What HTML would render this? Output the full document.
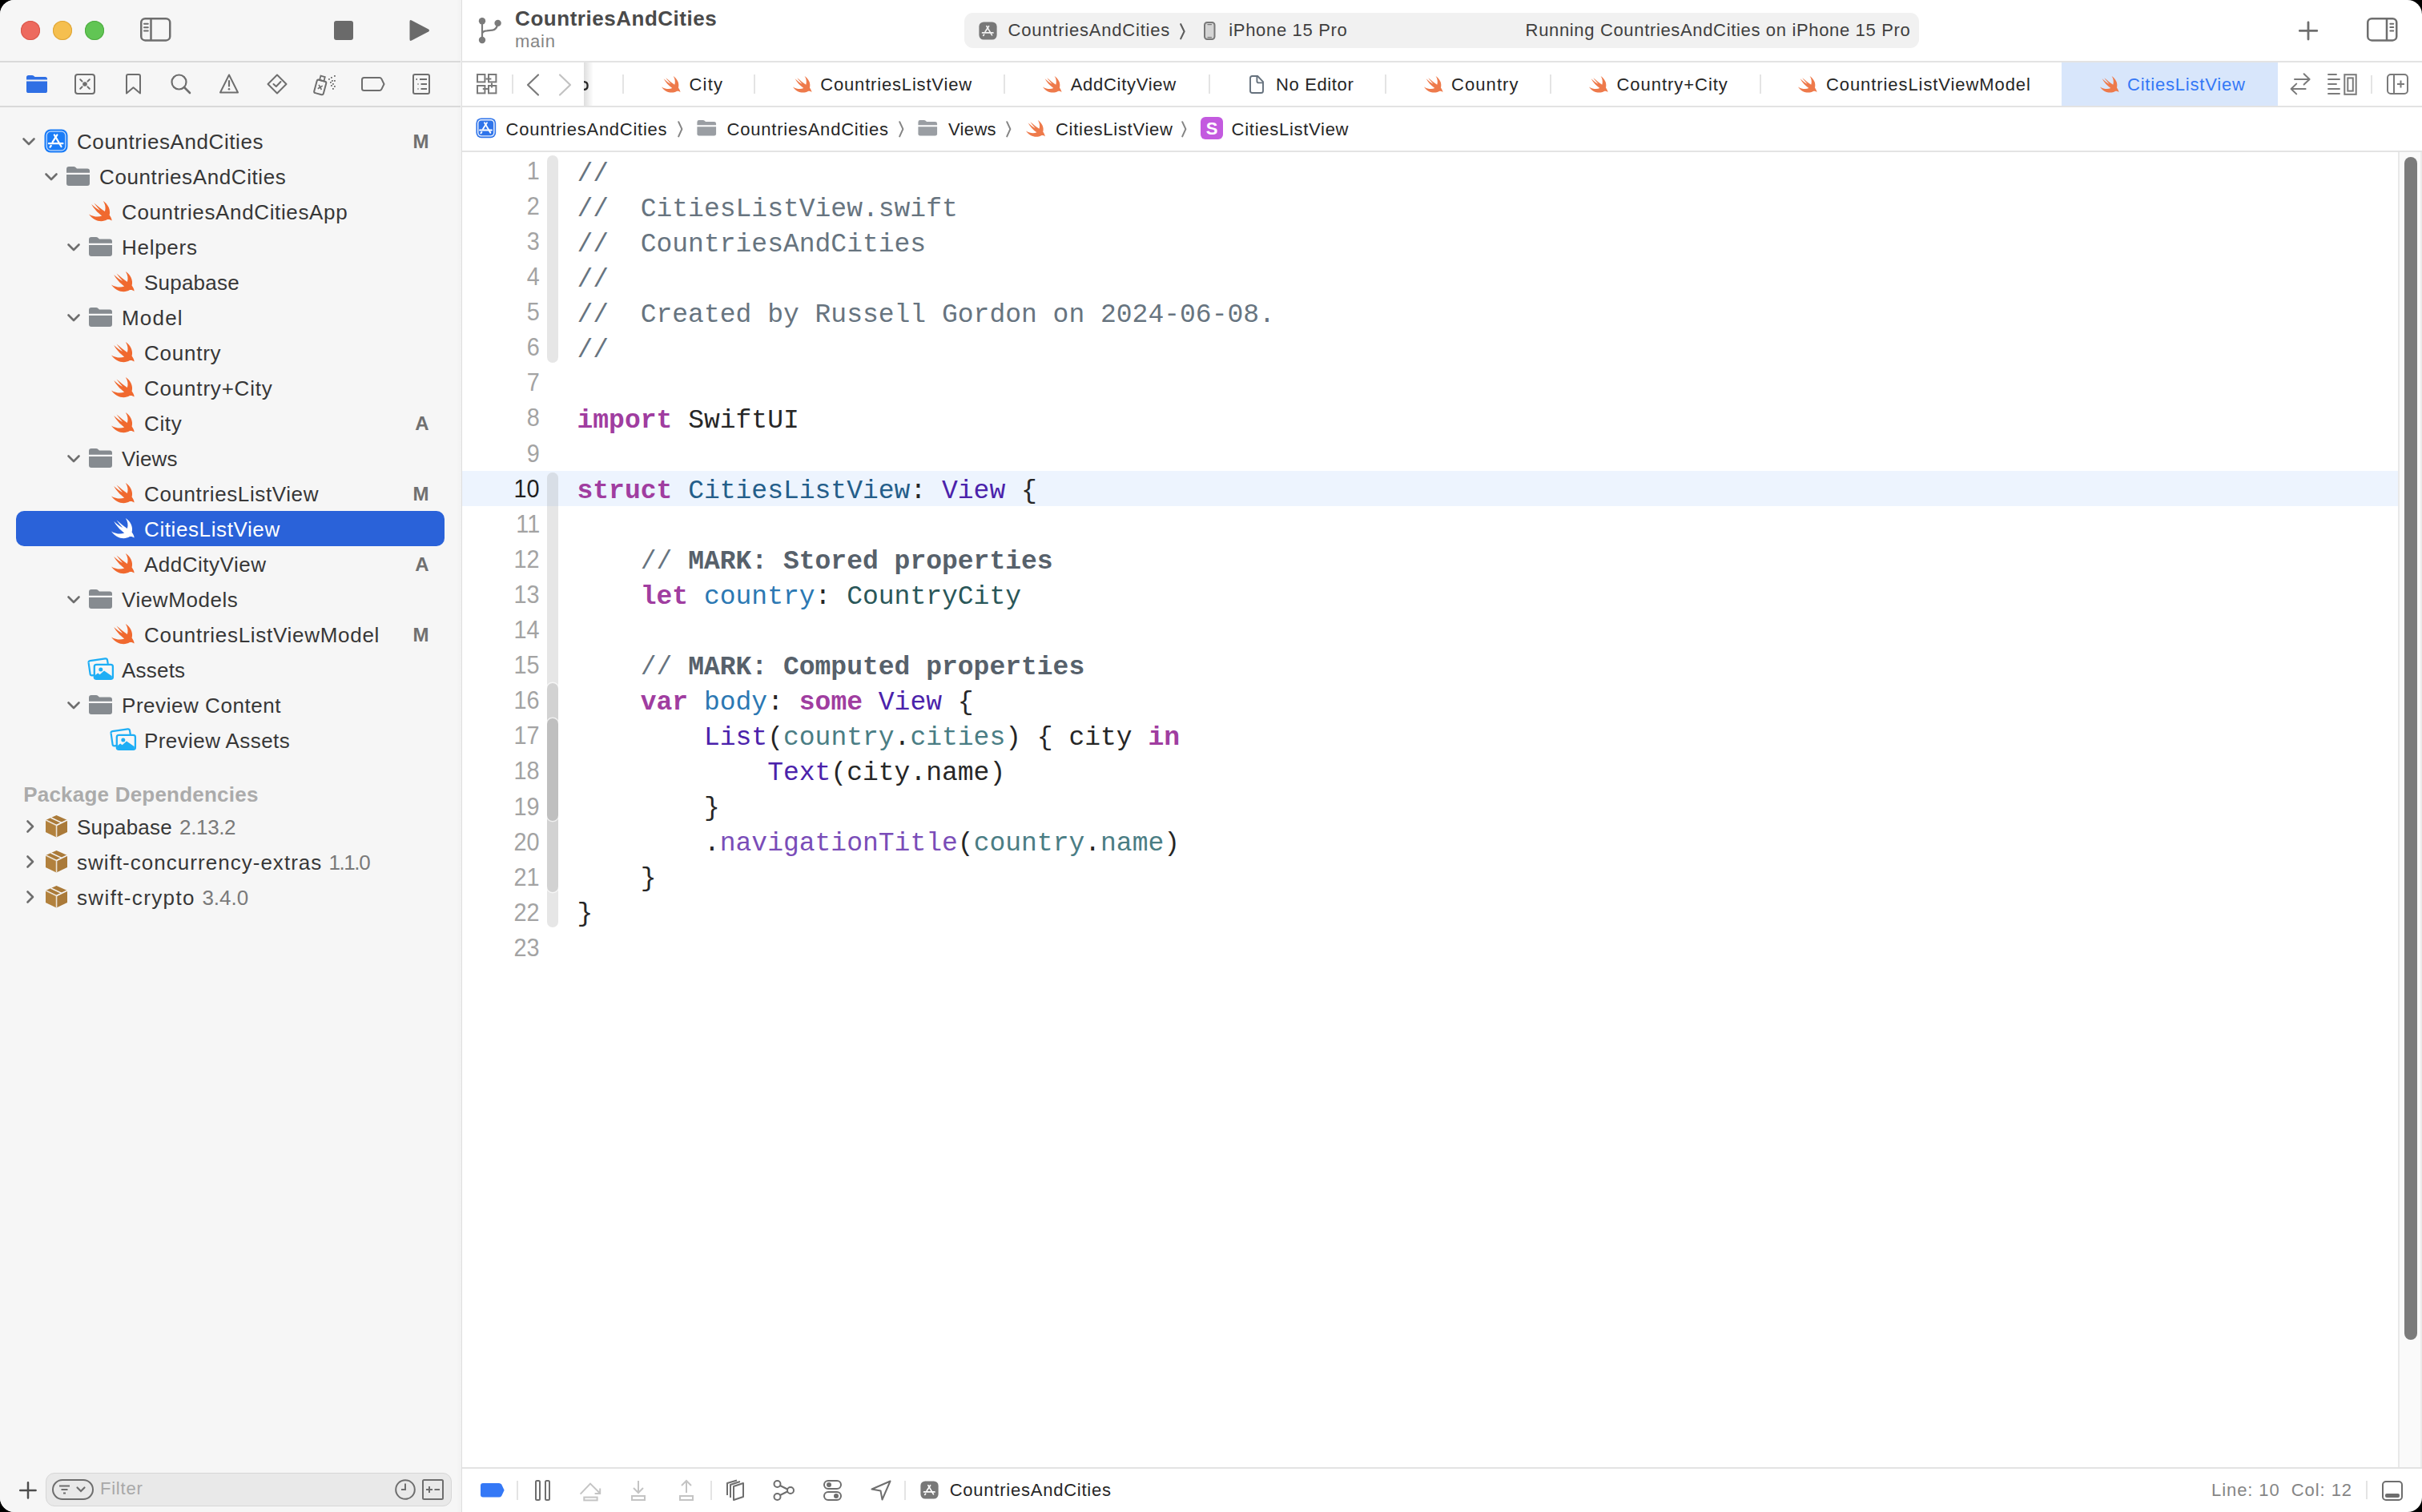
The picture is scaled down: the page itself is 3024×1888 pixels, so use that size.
<!DOCTYPE html><html><head><meta charset="utf-8"><style>
html,body{margin:0;padding:0;background:#000;}
body{width:3024px;height:1888px;overflow:hidden;position:relative;}
#win{position:absolute;left:0;top:0;width:3024px;height:1888px;border-radius:18px;overflow:hidden;background:#fff;}
.t{position:absolute;white-space:pre;}
svg{overflow:visible}
</style></head><body><div id="win">
<div style="position:absolute;left:0px;top:0px;width:576px;height:1888px;background:#f6f6f6;"></div>
<div style="position:absolute;left:570px;top:0px;width:6px;height:1888px;background:linear-gradient(to right, rgba(0,0,0,0), rgba(0,0,0,0.02));"></div>
<div style="position:absolute;left:576px;top:0px;width:1px;height:1888px;background:#dedede;"></div>
<div style="position:absolute;left:0px;top:76px;width:575px;height:2px;background:#d9d9d9;"></div>
<div style="position:absolute;left:0px;top:132px;width:575px;height:2px;background:#d9d9d9;"></div>
<div style="position:absolute;left:26px;top:26px;width:24px;height:24px;border-radius:50%;background:#ed6a5e;box-shadow:inset 0 0 0 1px #d8574a;"></div>
<div style="position:absolute;left:66px;top:26px;width:24px;height:24px;border-radius:50%;background:#f5bf4f;box-shadow:inset 0 0 0 1px #dea437;"></div>
<div style="position:absolute;left:106px;top:26px;width:24px;height:24px;border-radius:50%;background:#61c554;box-shadow:inset 0 0 0 1px #4eab41;"></div>
<svg style="position:absolute;left:175px;top:21.8px" width="39" height="30" viewBox="0 0 39 30"><rect x="1.25" y="1.25" width="36" height="27.2" rx="5" fill="none" stroke="#6e6e6e" stroke-width="2.5"/><path d="M13.5 1.5 V28.5" stroke="#6e6e6e" stroke-width="2.5"/><path d="M5 7.8 H9.8 M5 12.2 H9.8 M5 16.4 H9.8" stroke="#6e6e6e" stroke-width="2" stroke-linecap="round"/></svg>
<div style="position:absolute;left:417px;top:26px;width:24px;height:24px;background:#6a6a6a;border-radius:3px;"></div>
<svg style="position:absolute;left:510px;top:24px" width="27" height="28" viewBox="0 0 27 28"><path d="M1.5 3 Q1.5 0.2 4 1.5 L25 12.5 Q27 14 25 15.5 L4 26.5 Q1.5 27.8 1.5 25 Z" fill="#6a6a6a"/></svg>
<svg style="position:absolute;left:33px;top:94px" width="26" height="22" viewBox="0 0 26 22"><path d="M0 2.6 Q0 0 2.6 0 H7 Q8.4 0 9.4 0.9 L10.6 2 H23.4 Q26 2 26 4.6 V5.6 H0 Z" fill="#2f6fe4"/><path d="M0 7.6 H26 V19.4 Q26 22 23.4 22 H2.6 Q0 22 0 19.4 Z" fill="#2f6fe4"/></svg>
<svg style="position:absolute;left:93px;top:92px" width="26" height="26" viewBox="0 0 26 26"><rect x="1" y="1" width="24" height="24" rx="3" fill="none" stroke="#6e6e6e" stroke-width="2"/><circle cx="13" cy="13" r="2.8" fill="#6e6e6e"/><path d="M7.2 7.2 L9.6 9.6 M18.8 7.2 L16.4 9.6 M7.2 18.8 L9.6 16.4 M18.8 18.8 L16.4 16.4" stroke="#6e6e6e" stroke-width="2" stroke-linecap="round"/></svg>
<svg style="position:absolute;left:157px;top:92px" width="19" height="26" viewBox="0 0 19 26"><path d="M1 24.5 V3 Q1 1 3 1 H16 Q18 1 18 3 V24.5 L9.5 17.3 Z" fill="none" stroke="#6e6e6e" stroke-width="2" stroke-linejoin="round"/></svg>
<svg style="position:absolute;left:213px;top:92px" width="26" height="26" viewBox="0 0 26 26"><circle cx="10.5" cy="10.5" r="9" fill="none" stroke="#6e6e6e" stroke-width="2.2"/><path d="M17 17 L24 24" stroke="#6e6e6e" stroke-width="2.6" stroke-linecap="round"/></svg>
<svg style="position:absolute;left:274px;top:92px" width="24" height="25" viewBox="0 0 24 25"><path d="M12 1.5 L23 23.5 H1 Z" fill="none" stroke="#6e6e6e" stroke-width="2" stroke-linejoin="round"/><path d="M12 9 V15.5" stroke="#6e6e6e" stroke-width="2.2" stroke-linecap="round"/><circle cx="12" cy="19.3" r="1.3" fill="#6e6e6e"/></svg>
<svg style="position:absolute;left:333px;top:92px" width="26" height="26" viewBox="0 0 26 26"><path d="M13 1.5 L24.5 13 L13 24.5 L1.5 13 Z" fill="none" stroke="#6e6e6e" stroke-width="2" stroke-linejoin="round"/><path d="M8.5 13 L11.8 16 L17.5 10" fill="none" stroke="#6e6e6e" stroke-width="2" stroke-linecap="round" stroke-linejoin="round"/></svg>
<svg style="position:absolute;left:392px;top:92px" width="30" height="27" viewBox="0 0 30 27"><g transform="rotate(15 8 16)"><rect x="2" y="8.5" width="12" height="17" rx="2" fill="none" stroke="#6e6e6e" stroke-width="2"/><rect x="5" y="3" width="5.5" height="5.5" fill="none" stroke="#6e6e6e" stroke-width="1.8"/><path d="M5.6 14.5 L10.4 19.5 M10.4 14.5 L5.6 19.5" stroke="#6e6e6e" stroke-width="1.6"/></g><rect x="18" y="6" width="1.8" height="1.8" fill="#6e6e6e"/><rect x="21" y="4" width="1.8" height="1.8" fill="#6e6e6e"/><rect x="25" y="2" width="1.8" height="1.8" fill="#6e6e6e"/><rect x="22" y="8" width="1.8" height="1.8" fill="#6e6e6e"/><rect x="25" y="8" width="1.8" height="1.8" fill="#6e6e6e"/><rect x="20" y="10" width="1.8" height="1.8" fill="#6e6e6e"/><rect x="23" y="12" width="1.8" height="1.8" fill="#6e6e6e"/><rect x="21" y="14" width="1.8" height="1.8" fill="#6e6e6e"/><rect x="25" y="15" width="1.8" height="1.8" fill="#6e6e6e"/><rect x="23" y="18" width="1.8" height="1.8" fill="#6e6e6e"/></svg>
<svg style="position:absolute;left:451px;top:96px" width="30" height="18" viewBox="0 0 30 18"><path d="M3.5 1 H23 Q24.5 1 25.3 2.4 L28.5 9 L25.3 15.6 Q24.5 17 23 17 H3.5 Q1 17 1 14.5 V3.5 Q1 1 3.5 1 Z" fill="none" stroke="#6e6e6e" stroke-width="2"/></svg>
<svg style="position:absolute;left:515px;top:92px" width="22" height="26" viewBox="0 0 22 26"><rect x="1" y="1" width="20" height="24" rx="2" fill="none" stroke="#6e6e6e" stroke-width="2"/><path d="M9 7 H18 M10.5 13 H18 M10.5 19 H18" stroke="#6e6e6e" stroke-width="2"/><path d="M4.5 7 H6 M6.5 13 H7.5 M6.5 19 H7.5" stroke="#6e6e6e" stroke-width="2"/></svg>
<div style="position:absolute;left:20px;top:638px;width:535px;height:43.8px;background:#2a62d9;border-radius:10px;"></div>
<svg style="position:absolute;left:28px;top:172px" width="16" height="10" viewBox="0 0 16 10"><path d="M1.5 1.5 L8 8 L14.5 1.5" fill="none" stroke="#6e6e6e" stroke-width="2.6" stroke-linecap="round" stroke-linejoin="round"/></svg>
<svg style="position:absolute;left:54.5px;top:161px" width="30" height="30" viewBox="0 0 30 30"><rect x="0.5" y="0.5" width="29" height="29" rx="7.5" fill="#1a7cf7"/><rect x="3.2" y="3.2" width="23.6" height="23.6" rx="5" fill="none" stroke="#cfe2fd" stroke-width="1.3" opacity="0.9"/><g stroke="#ffffff" stroke-width="2.2" stroke-linecap="round" fill="none"><path d="M12.8 7.4 L21.5 22"/><path d="M16.4 7.4 L10.6 16.4"/><path d="M5.9 18.2 H23.4"/><path d="M8.7 21 L7.5 22.7"/></g></svg>
<div class="t" style="left:96px;top:164.49px;font-size:26px;line-height:26px;color:#373737;font-weight:normal;font-family:'Liberation Sans', sans-serif;letter-spacing:0.585px;">CountriesAndCities</div>
<div class="t" style="right:2488.5px;top:165.18px;font-size:24px;line-height:24px;color:#707070;font-weight:bold;font-family:'Liberation Sans', sans-serif;">M</div>
<svg style="position:absolute;left:56px;top:216px" width="16" height="10" viewBox="0 0 16 10"><path d="M1.5 1.5 L8 8 L14.5 1.5" fill="none" stroke="#6e6e6e" stroke-width="2.6" stroke-linecap="round" stroke-linejoin="round"/></svg>
<svg style="position:absolute;left:83px;top:208px" width="29" height="24" viewBox="0 0 29 24"><path d="M0 3 Q0 0 3 0 H9 Q10.4 0 11.4 1 L13 2.6 H26 Q29 2.6 29 5.6 V7.7 H0 Z" fill="#868b90"/><path d="M0 10.1 H29 V21 Q29 24 26 24 H3 Q0 24 0 21 Z" fill="#868b90"/></svg>
<div class="t" style="left:124px;top:208.49px;font-size:26px;line-height:26px;color:#373737;font-weight:normal;font-family:'Liberation Sans', sans-serif;letter-spacing:0.603px;">CountriesAndCities</div>
<svg style="position:absolute;left:111px;top:250.5px" width="29.0" height="25.0" viewBox="0 0 29 25"><path d="M17.8 0 C23.5 3.8 27.6 10.5 25.6 17.6 C27.2 19.8 28.6 22.6 28.6 24.6 C27 23.2 25 22.6 23 23.1 C16 27.2 6 25.2 0 16.4 C6 19.9 12 20.2 16.2 18.4 C11 15 6 9.2 3.2 4.1 C7 7.6 11 10.6 14 12 C11.6 9 8.6 5.6 6.5 2.6 C11 6.2 16 10.6 19.9 13 C21.2 9 20.6 4 17.8 0 Z" fill="#f0692f"/></svg>
<div class="t" style="left:152px;top:252.49px;font-size:26px;line-height:26px;color:#373737;font-weight:normal;font-family:'Liberation Sans', sans-serif;letter-spacing:0.642px;">CountriesAndCitiesApp</div>
<svg style="position:absolute;left:84px;top:304px" width="16" height="10" viewBox="0 0 16 10"><path d="M1.5 1.5 L8 8 L14.5 1.5" fill="none" stroke="#6e6e6e" stroke-width="2.6" stroke-linecap="round" stroke-linejoin="round"/></svg>
<svg style="position:absolute;left:111px;top:296px" width="29" height="24" viewBox="0 0 29 24"><path d="M0 3 Q0 0 3 0 H9 Q10.4 0 11.4 1 L13 2.6 H26 Q29 2.6 29 5.6 V7.7 H0 Z" fill="#868b90"/><path d="M0 10.1 H29 V21 Q29 24 26 24 H3 Q0 24 0 21 Z" fill="#868b90"/></svg>
<div class="t" style="left:152px;top:296.49px;font-size:26px;line-height:26px;color:#373737;font-weight:normal;font-family:'Liberation Sans', sans-serif;letter-spacing:0.718px;">Helpers</div>
<svg style="position:absolute;left:139px;top:338.5px" width="29.0" height="25.0" viewBox="0 0 29 25"><path d="M17.8 0 C23.5 3.8 27.6 10.5 25.6 17.6 C27.2 19.8 28.6 22.6 28.6 24.6 C27 23.2 25 22.6 23 23.1 C16 27.2 6 25.2 0 16.4 C6 19.9 12 20.2 16.2 18.4 C11 15 6 9.2 3.2 4.1 C7 7.6 11 10.6 14 12 C11.6 9 8.6 5.6 6.5 2.6 C11 6.2 16 10.6 19.9 13 C21.2 9 20.6 4 17.8 0 Z" fill="#f0692f"/></svg>
<div class="t" style="left:180px;top:340.49px;font-size:26px;line-height:26px;color:#373737;font-weight:normal;font-family:'Liberation Sans', sans-serif;letter-spacing:0.223px;">Supabase</div>
<svg style="position:absolute;left:84px;top:392px" width="16" height="10" viewBox="0 0 16 10"><path d="M1.5 1.5 L8 8 L14.5 1.5" fill="none" stroke="#6e6e6e" stroke-width="2.6" stroke-linecap="round" stroke-linejoin="round"/></svg>
<svg style="position:absolute;left:111px;top:384px" width="29" height="24" viewBox="0 0 29 24"><path d="M0 3 Q0 0 3 0 H9 Q10.4 0 11.4 1 L13 2.6 H26 Q29 2.6 29 5.6 V7.7 H0 Z" fill="#868b90"/><path d="M0 10.1 H29 V21 Q29 24 26 24 H3 Q0 24 0 21 Z" fill="#868b90"/></svg>
<div class="t" style="left:152px;top:384.49px;font-size:26px;line-height:26px;color:#373737;font-weight:normal;font-family:'Liberation Sans', sans-serif;letter-spacing:1.19px;">Model</div>
<svg style="position:absolute;left:139px;top:426.5px" width="29.0" height="25.0" viewBox="0 0 29 25"><path d="M17.8 0 C23.5 3.8 27.6 10.5 25.6 17.6 C27.2 19.8 28.6 22.6 28.6 24.6 C27 23.2 25 22.6 23 23.1 C16 27.2 6 25.2 0 16.4 C6 19.9 12 20.2 16.2 18.4 C11 15 6 9.2 3.2 4.1 C7 7.6 11 10.6 14 12 C11.6 9 8.6 5.6 6.5 2.6 C11 6.2 16 10.6 19.9 13 C21.2 9 20.6 4 17.8 0 Z" fill="#f0692f"/></svg>
<div class="t" style="left:180px;top:428.49px;font-size:26px;line-height:26px;color:#373737;font-weight:normal;font-family:'Liberation Sans', sans-serif;letter-spacing:0.76px;">Country</div>
<svg style="position:absolute;left:139px;top:470.5px" width="29.0" height="25.0" viewBox="0 0 29 25"><path d="M17.8 0 C23.5 3.8 27.6 10.5 25.6 17.6 C27.2 19.8 28.6 22.6 28.6 24.6 C27 23.2 25 22.6 23 23.1 C16 27.2 6 25.2 0 16.4 C6 19.9 12 20.2 16.2 18.4 C11 15 6 9.2 3.2 4.1 C7 7.6 11 10.6 14 12 C11.6 9 8.6 5.6 6.5 2.6 C11 6.2 16 10.6 19.9 13 C21.2 9 20.6 4 17.8 0 Z" fill="#f0692f"/></svg>
<div class="t" style="left:180px;top:472.49px;font-size:26px;line-height:26px;color:#373737;font-weight:normal;font-family:'Liberation Sans', sans-serif;letter-spacing:0.8px;">Country+City</div>
<svg style="position:absolute;left:139px;top:514.5px" width="29.0" height="25.0" viewBox="0 0 29 25"><path d="M17.8 0 C23.5 3.8 27.6 10.5 25.6 17.6 C27.2 19.8 28.6 22.6 28.6 24.6 C27 23.2 25 22.6 23 23.1 C16 27.2 6 25.2 0 16.4 C6 19.9 12 20.2 16.2 18.4 C11 15 6 9.2 3.2 4.1 C7 7.6 11 10.6 14 12 C11.6 9 8.6 5.6 6.5 2.6 C11 6.2 16 10.6 19.9 13 C21.2 9 20.6 4 17.8 0 Z" fill="#f0692f"/></svg>
<div class="t" style="left:180px;top:516.49px;font-size:26px;line-height:26px;color:#373737;font-weight:normal;font-family:'Liberation Sans', sans-serif;letter-spacing:0.641px;">City</div>
<div class="t" style="right:2488.5px;top:517.18px;font-size:24px;line-height:24px;color:#707070;font-weight:bold;font-family:'Liberation Sans', sans-serif;">A</div>
<svg style="position:absolute;left:84px;top:568px" width="16" height="10" viewBox="0 0 16 10"><path d="M1.5 1.5 L8 8 L14.5 1.5" fill="none" stroke="#6e6e6e" stroke-width="2.6" stroke-linecap="round" stroke-linejoin="round"/></svg>
<svg style="position:absolute;left:111px;top:560px" width="29" height="24" viewBox="0 0 29 24"><path d="M0 3 Q0 0 3 0 H9 Q10.4 0 11.4 1 L13 2.6 H26 Q29 2.6 29 5.6 V7.7 H0 Z" fill="#868b90"/><path d="M0 10.1 H29 V21 Q29 24 26 24 H3 Q0 24 0 21 Z" fill="#868b90"/></svg>
<div class="t" style="left:152px;top:560.49px;font-size:26px;line-height:26px;color:#373737;font-weight:normal;font-family:'Liberation Sans', sans-serif;letter-spacing:0.129px;">Views</div>
<svg style="position:absolute;left:139px;top:602.5px" width="29.0" height="25.0" viewBox="0 0 29 25"><path d="M17.8 0 C23.5 3.8 27.6 10.5 25.6 17.6 C27.2 19.8 28.6 22.6 28.6 24.6 C27 23.2 25 22.6 23 23.1 C16 27.2 6 25.2 0 16.4 C6 19.9 12 20.2 16.2 18.4 C11 15 6 9.2 3.2 4.1 C7 7.6 11 10.6 14 12 C11.6 9 8.6 5.6 6.5 2.6 C11 6.2 16 10.6 19.9 13 C21.2 9 20.6 4 17.8 0 Z" fill="#f0692f"/></svg>
<div class="t" style="left:180px;top:604.49px;font-size:26px;line-height:26px;color:#373737;font-weight:normal;font-family:'Liberation Sans', sans-serif;letter-spacing:0.616px;">CountriesListView</div>
<div class="t" style="right:2488.5px;top:605.18px;font-size:24px;line-height:24px;color:#707070;font-weight:bold;font-family:'Liberation Sans', sans-serif;">M</div>
<svg style="position:absolute;left:139px;top:646.5px" width="29.0" height="25.0" viewBox="0 0 29 25"><path d="M17.8 0 C23.5 3.8 27.6 10.5 25.6 17.6 C27.2 19.8 28.6 22.6 28.6 24.6 C27 23.2 25 22.6 23 23.1 C16 27.2 6 25.2 0 16.4 C6 19.9 12 20.2 16.2 18.4 C11 15 6 9.2 3.2 4.1 C7 7.6 11 10.6 14 12 C11.6 9 8.6 5.6 6.5 2.6 C11 6.2 16 10.6 19.9 13 C21.2 9 20.6 4 17.8 0 Z" fill="#ffffff"/></svg>
<div class="t" style="left:180px;top:648.49px;font-size:26px;line-height:26px;color:#ffffff;font-weight:normal;font-family:'Liberation Sans', sans-serif;letter-spacing:0.601px;">CitiesListView</div>
<svg style="position:absolute;left:139px;top:690.5px" width="29.0" height="25.0" viewBox="0 0 29 25"><path d="M17.8 0 C23.5 3.8 27.6 10.5 25.6 17.6 C27.2 19.8 28.6 22.6 28.6 24.6 C27 23.2 25 22.6 23 23.1 C16 27.2 6 25.2 0 16.4 C6 19.9 12 20.2 16.2 18.4 C11 15 6 9.2 3.2 4.1 C7 7.6 11 10.6 14 12 C11.6 9 8.6 5.6 6.5 2.6 C11 6.2 16 10.6 19.9 13 C21.2 9 20.6 4 17.8 0 Z" fill="#f0692f"/></svg>
<div class="t" style="left:180px;top:692.49px;font-size:26px;line-height:26px;color:#373737;font-weight:normal;font-family:'Liberation Sans', sans-serif;letter-spacing:0.505px;">AddCityView</div>
<div class="t" style="right:2488.5px;top:693.18px;font-size:24px;line-height:24px;color:#707070;font-weight:bold;font-family:'Liberation Sans', sans-serif;">A</div>
<svg style="position:absolute;left:84px;top:744px" width="16" height="10" viewBox="0 0 16 10"><path d="M1.5 1.5 L8 8 L14.5 1.5" fill="none" stroke="#6e6e6e" stroke-width="2.6" stroke-linecap="round" stroke-linejoin="round"/></svg>
<svg style="position:absolute;left:111px;top:736px" width="29" height="24" viewBox="0 0 29 24"><path d="M0 3 Q0 0 3 0 H9 Q10.4 0 11.4 1 L13 2.6 H26 Q29 2.6 29 5.6 V7.7 H0 Z" fill="#868b90"/><path d="M0 10.1 H29 V21 Q29 24 26 24 H3 Q0 24 0 21 Z" fill="#868b90"/></svg>
<div class="t" style="left:152px;top:736.49px;font-size:26px;line-height:26px;color:#373737;font-weight:normal;font-family:'Liberation Sans', sans-serif;letter-spacing:0.567px;">ViewModels</div>
<svg style="position:absolute;left:139px;top:778.5px" width="29.0" height="25.0" viewBox="0 0 29 25"><path d="M17.8 0 C23.5 3.8 27.6 10.5 25.6 17.6 C27.2 19.8 28.6 22.6 28.6 24.6 C27 23.2 25 22.6 23 23.1 C16 27.2 6 25.2 0 16.4 C6 19.9 12 20.2 16.2 18.4 C11 15 6 9.2 3.2 4.1 C7 7.6 11 10.6 14 12 C11.6 9 8.6 5.6 6.5 2.6 C11 6.2 16 10.6 19.9 13 C21.2 9 20.6 4 17.8 0 Z" fill="#f0692f"/></svg>
<div class="t" style="left:180px;top:780.49px;font-size:26px;line-height:26px;color:#373737;font-weight:normal;font-family:'Liberation Sans', sans-serif;letter-spacing:0.712px;">CountriesListViewModel</div>
<div class="t" style="right:2488.5px;top:781.18px;font-size:24px;line-height:24px;color:#707070;font-weight:bold;font-family:'Liberation Sans', sans-serif;">M</div>
<svg style="position:absolute;left:110px;top:822px" width="32" height="29" viewBox="0 0 32 29"><path d="M0.6 5.6 Q0.2 3.4 2.4 3.1 L21.4 0.4 Q23.6 0.1 24 2.3 L24.8 7" fill="none" stroke="#1eaef5" stroke-width="2.2" stroke-linejoin="round"/><path d="M0.6 5.6 L2.6 19.6 Q2.9 21.6 5 21.4 L7 21.1" fill="none" stroke="#1eaef5" stroke-width="2.2" stroke-linejoin="round"/><rect x="7.8" y="7.8" width="23.1" height="18.1" rx="2.6" fill="#f6f6f6" stroke="#1eaef5" stroke-width="2.3"/><path d="M8.9 21 L12.2 18.6 L14.6 20.2 L20 15.6 L29.8 22.2 V23.6 Q29.8 25.2 28.2 25.2 H10.5 Q8.9 25.2 8.9 23.6 Z" fill="#1eaef5"/><circle cx="15.8" cy="13.9" r="2.5" fill="#1eaef5"/></svg>
<div class="t" style="left:152px;top:824.49px;font-size:26px;line-height:26px;color:#373737;font-weight:normal;font-family:'Liberation Sans', sans-serif;letter-spacing:0.215px;">Assets</div>
<svg style="position:absolute;left:84px;top:876px" width="16" height="10" viewBox="0 0 16 10"><path d="M1.5 1.5 L8 8 L14.5 1.5" fill="none" stroke="#6e6e6e" stroke-width="2.6" stroke-linecap="round" stroke-linejoin="round"/></svg>
<svg style="position:absolute;left:111px;top:868px" width="29" height="24" viewBox="0 0 29 24"><path d="M0 3 Q0 0 3 0 H9 Q10.4 0 11.4 1 L13 2.6 H26 Q29 2.6 29 5.6 V7.7 H0 Z" fill="#868b90"/><path d="M0 10.1 H29 V21 Q29 24 26 24 H3 Q0 24 0 21 Z" fill="#868b90"/></svg>
<div class="t" style="left:152px;top:868.49px;font-size:26px;line-height:26px;color:#373737;font-weight:normal;font-family:'Liberation Sans', sans-serif;letter-spacing:0.547px;">Preview Content</div>
<svg style="position:absolute;left:138px;top:910px" width="32" height="29" viewBox="0 0 32 29"><path d="M0.6 5.6 Q0.2 3.4 2.4 3.1 L21.4 0.4 Q23.6 0.1 24 2.3 L24.8 7" fill="none" stroke="#1eaef5" stroke-width="2.2" stroke-linejoin="round"/><path d="M0.6 5.6 L2.6 19.6 Q2.9 21.6 5 21.4 L7 21.1" fill="none" stroke="#1eaef5" stroke-width="2.2" stroke-linejoin="round"/><rect x="7.8" y="7.8" width="23.1" height="18.1" rx="2.6" fill="#f6f6f6" stroke="#1eaef5" stroke-width="2.3"/><path d="M8.9 21 L12.2 18.6 L14.6 20.2 L20 15.6 L29.8 22.2 V23.6 Q29.8 25.2 28.2 25.2 H10.5 Q8.9 25.2 8.9 23.6 Z" fill="#1eaef5"/><circle cx="15.8" cy="13.9" r="2.5" fill="#1eaef5"/></svg>
<div class="t" style="left:180px;top:912.49px;font-size:26px;line-height:26px;color:#373737;font-weight:normal;font-family:'Liberation Sans', sans-serif;letter-spacing:0.414px;">Preview Assets</div>
<div class="t" style="left:29.2px;top:978.99px;font-size:26px;line-height:26px;color:#ababab;font-weight:bold;font-family:'Liberation Sans', sans-serif;letter-spacing:0.217px;">Package Dependencies</div>
<svg style="position:absolute;left:33px;top:1024px" width="10" height="16" viewBox="0 0 10 16"><path d="M1.5 1.5 L8 8 L1.5 14.5" fill="none" stroke="#6e6e6e" stroke-width="2.6" stroke-linecap="round" stroke-linejoin="round"/></svg>
<svg style="position:absolute;left:57px;top:1018px" width="27" height="28" viewBox="0 0 27 28"><path d="M13.5 0 L27 6 V21 L13.5 27.5 L0 21 V6 Z" fill="#aa7a39"/><path d="M0 6 L13.5 12.5 L27 6" fill="none" stroke="#f5f5f5" stroke-width="1.6"/><path d="M13.5 12.5 V27.5" stroke="#f5f5f5" stroke-width="1.6"/><path d="M6.5 3 L20 9.4" stroke="#f5f5f5" stroke-width="1.6"/><path d="M0 6 L13.5 12.5 V27.5 L0 21 Z" fill="#c48f45" opacity="0.35"/></svg>
<div class="t" style="left:96px;top:1020.49px;font-size:26px;line-height:26px;color:#373737;font-weight:normal;font-family:'Liberation Sans', sans-serif;letter-spacing:0.237px;">Supabase</div>
<div class="t" style="left:224.1px;top:1020.49px;font-size:26px;line-height:26px;color:#7a7a7a;font-weight:normal;font-family:'Liberation Sans', sans-serif;letter-spacing:-0.365px;">2.13.2</div>
<svg style="position:absolute;left:33px;top:1068px" width="10" height="16" viewBox="0 0 10 16"><path d="M1.5 1.5 L8 8 L1.5 14.5" fill="none" stroke="#6e6e6e" stroke-width="2.6" stroke-linecap="round" stroke-linejoin="round"/></svg>
<svg style="position:absolute;left:57px;top:1062px" width="27" height="28" viewBox="0 0 27 28"><path d="M13.5 0 L27 6 V21 L13.5 27.5 L0 21 V6 Z" fill="#aa7a39"/><path d="M0 6 L13.5 12.5 L27 6" fill="none" stroke="#f5f5f5" stroke-width="1.6"/><path d="M13.5 12.5 V27.5" stroke="#f5f5f5" stroke-width="1.6"/><path d="M6.5 3 L20 9.4" stroke="#f5f5f5" stroke-width="1.6"/><path d="M0 6 L13.5 12.5 V27.5 L0 21 Z" fill="#c48f45" opacity="0.35"/></svg>
<div class="t" style="left:96px;top:1064.49px;font-size:26px;line-height:26px;color:#373737;font-weight:normal;font-family:'Liberation Sans', sans-serif;letter-spacing:1.025px;">swift-concurrency-extras</div>
<div class="t" style="left:410.4px;top:1064.49px;font-size:26px;line-height:26px;color:#7a7a7a;font-weight:normal;font-family:'Liberation Sans', sans-serif;letter-spacing:-1.392px;">1.1.0</div>
<svg style="position:absolute;left:33px;top:1112px" width="10" height="16" viewBox="0 0 10 16"><path d="M1.5 1.5 L8 8 L1.5 14.5" fill="none" stroke="#6e6e6e" stroke-width="2.6" stroke-linecap="round" stroke-linejoin="round"/></svg>
<svg style="position:absolute;left:57px;top:1106px" width="27" height="28" viewBox="0 0 27 28"><path d="M13.5 0 L27 6 V21 L13.5 27.5 L0 21 V6 Z" fill="#aa7a39"/><path d="M0 6 L13.5 12.5 L27 6" fill="none" stroke="#f5f5f5" stroke-width="1.6"/><path d="M13.5 12.5 V27.5" stroke="#f5f5f5" stroke-width="1.6"/><path d="M6.5 3 L20 9.4" stroke="#f5f5f5" stroke-width="1.6"/><path d="M0 6 L13.5 12.5 V27.5 L0 21 Z" fill="#c48f45" opacity="0.35"/></svg>
<div class="t" style="left:96px;top:1108.49px;font-size:26px;line-height:26px;color:#373737;font-weight:normal;font-family:'Liberation Sans', sans-serif;letter-spacing:1.364px;">swift-crypto</div>
<div class="t" style="left:252.4px;top:1108.49px;font-size:26px;line-height:26px;color:#7a7a7a;font-weight:normal;font-family:'Liberation Sans', sans-serif;letter-spacing:0.008px;">3.4.0</div>
<svg style="position:absolute;left:23.5px;top:1849.5px" width="22" height="22" viewBox="0 0 22 22"><path d="M11 1.2 V20.6 M1.2 11 H20.6" stroke="#4d4d4d" stroke-width="2.5" stroke-linecap="round"/></svg>
<div style="position:absolute;left:56.5px;top:1838.5px;width:507px;height:42.5px;background:#e9e9e9;border:1.5px solid #d6d6d6;border-radius:11px;box-sizing:border-box;"></div>
<svg style="position:absolute;left:65px;top:1847px" width="52" height="26" viewBox="0 0 52 26"><rect x="1" y="1" width="50" height="24" rx="12" fill="none" stroke="#6e6e6e" stroke-width="2"/><path d="M9 8.5 H22 M11.5 13 H19.5 M14 17.5 H17" stroke="#6e6e6e" stroke-width="2"/><path d="M31.5 10.5 L36 15 L40.5 10.5" fill="none" stroke="#6e6e6e" stroke-width="2.2" stroke-linecap="round"/></svg>
<div class="t" style="left:125px;top:1847.87px;font-size:22px;line-height:22px;color:#a8a8a8;font-weight:normal;font-family:'Liberation Sans', sans-serif;letter-spacing:0.768px;">Filter</div>
<svg style="position:absolute;left:493px;top:1847px" width="26" height="26" viewBox="0 0 26 26"><circle cx="13" cy="13" r="11.8" fill="none" stroke="#6e6e6e" stroke-width="2"/><path d="M13 5.5 V13 H8" fill="none" stroke="#6e6e6e" stroke-width="2"/></svg>
<svg style="position:absolute;left:527px;top:1847px" width="27" height="26" viewBox="0 0 27 26"><rect x="1" y="1" width="25" height="24" rx="1.5" fill="none" stroke="#6e6e6e" stroke-width="2"/><path d="M5 13 H13 M9 9 V17 M15.5 13 H22" stroke="#6e6e6e" stroke-width="2"/></svg>
<svg style="position:absolute;left:596px;top:21px" width="32" height="34" viewBox="0 0 32 34"><g fill="#7b7b7b"><circle cx="6" cy="5.2" r="4.2"/><circle cx="6" cy="29" r="4.2"/><circle cx="25.6" cy="7.9" r="4.2"/></g><path d="M6 5 V29 M6 21.5 Q6 17.6 12 17.3 L19 16.6 Q24.2 16 25.2 9" fill="none" stroke="#7b7b7b" stroke-width="2.2"/></svg>
<div class="t" style="left:643.1px;top:10.49px;font-size:26px;line-height:26px;color:#4a4a4a;font-weight:bold;font-family:'Liberation Sans', sans-serif;letter-spacing:0.528px;">CountriesAndCities</div>
<div class="t" style="left:643px;top:40.97px;font-size:22px;line-height:22px;color:#858585;font-weight:normal;font-family:'Liberation Sans', sans-serif;letter-spacing:0.75px;">main</div>
<div style="position:absolute;left:1204px;top:16px;width:1192px;height:43.5px;background:#f1f1f1;border-radius:11px;"></div>
<svg style="position:absolute;left:1222px;top:27px" width="23" height="23" viewBox="0 0 30 30"><rect x="0.5" y="0.5" width="29" height="29" rx="7.5" fill="#787878"/><rect x="3.2" y="3.2" width="23.6" height="23.6" rx="5" fill="none" stroke="#787878" stroke-width="1.3" opacity="0.9"/><g stroke="#f1f1f1" stroke-width="2.2" stroke-linecap="round" fill="none"><path d="M12.8 7.4 L21.5 22"/><path d="M16.4 7.4 L10.6 16.4"/><path d="M5.9 18.2 H23.4"/><path d="M8.7 21 L7.5 22.7"/></g></svg>
<div class="t" style="left:1258.6px;top:27.07px;font-size:22px;line-height:22px;color:#404040;font-weight:normal;font-family:'Liberation Sans', sans-serif;letter-spacing:0.788px;">CountriesAndCities</div>
<svg style="position:absolute;left:1472.5px;top:28.5px" width="8" height="21" viewBox="0 0 8 21"><path d="M1.2 1.2 L5.6 10.3 L1.2 19.4" fill="none" stroke="#5c5c5c" stroke-width="2.1" stroke-linecap="round" stroke-linejoin="round"/></svg>
<svg style="position:absolute;left:1502.5px;top:26.8px" width="15" height="23" viewBox="0 0 15 23"><rect x="1" y="1" width="12.5" height="21" rx="3.2" fill="#d4d4d4" stroke="#787878" stroke-width="2"/><path d="M5 3.6 H9.5 M5 19.6 H9.5" stroke="#787878" stroke-width="1.4" stroke-linecap="round"/></svg>
<div class="t" style="left:1534.3px;top:27.07px;font-size:22px;line-height:22px;color:#404040;font-weight:normal;font-family:'Liberation Sans', sans-serif;letter-spacing:0.667px;">iPhone 15 Pro</div>
<div class="t" style="left:1904.6px;top:27.07px;font-size:22px;line-height:22px;color:#404040;font-weight:normal;font-family:'Liberation Sans', sans-serif;letter-spacing:0.658px;">Running CountriesAndCities on iPhone 15 Pro</div>
<svg style="position:absolute;left:2871px;top:26.5px" width="23" height="23" viewBox="0 0 23 23"><path d="M11 0.8 V22 M0.3 11.4 H21.8" stroke="#6e6e6e" stroke-width="2.8" stroke-linecap="round"/></svg>
<svg style="position:absolute;left:2955px;top:21.8px" width="39" height="30" viewBox="0 0 39 30"><rect x="1.25" y="1.25" width="36" height="27.2" rx="5" fill="none" stroke="#6e6e6e" stroke-width="2.5"/><path d="M25 1.5 V28.5" stroke="#6e6e6e" stroke-width="2.5"/><path d="M29.3 7.8 H33.3 M29.3 12.1 H33.3 M29.3 16.4 H33.3" stroke="#6e6e6e" stroke-width="2" stroke-linecap="round"/></svg>
<div style="position:absolute;left:577px;top:76px;width:2447px;height:2px;background:#e3e3e3;"></div>
<div style="position:absolute;left:577px;top:132px;width:2447px;height:2px;background:#e3e3e3;"></div>
<div style="position:absolute;left:577px;top:188px;width:2447px;height:2px;background:#e3e3e3;"></div>
<div style="position:absolute;left:2574px;top:78px;width:270px;height:54px;background:#d8e6fb;"></div>
<div style="position:absolute;left:777px;top:93px;width:2px;height:24px;background:#e4e4e4;"></div>
<svg style="position:absolute;left:826px;top:95px" width="23.78" height="20.5" viewBox="0 0 29 25"><path d="M17.8 0 C23.5 3.8 27.6 10.5 25.6 17.6 C27.2 19.8 28.6 22.6 28.6 24.6 C27 23.2 25 22.6 23 23.1 C16 27.2 6 25.2 0 16.4 C6 19.9 12 20.2 16.2 18.4 C11 15 6 9.2 3.2 4.1 C7 7.6 11 10.6 14 12 C11.6 9 8.6 5.6 6.5 2.6 C11 6.2 16 10.6 19.9 13 C21.2 9 20.6 4 17.8 0 Z" fill="#ee7a4b"/></svg>
<div class="t" style="left:860.5px;top:95.37px;font-size:22px;line-height:22px;color:#262626;font-weight:normal;font-family:'Liberation Sans', sans-serif;letter-spacing:1.204px;">City</div>
<div style="position:absolute;left:941px;top:93px;width:2px;height:24px;background:#e4e4e4;"></div>
<svg style="position:absolute;left:990px;top:95px" width="23.78" height="20.5" viewBox="0 0 29 25"><path d="M17.8 0 C23.5 3.8 27.6 10.5 25.6 17.6 C27.2 19.8 28.6 22.6 28.6 24.6 C27 23.2 25 22.6 23 23.1 C16 27.2 6 25.2 0 16.4 C6 19.9 12 20.2 16.2 18.4 C11 15 6 9.2 3.2 4.1 C7 7.6 11 10.6 14 12 C11.6 9 8.6 5.6 6.5 2.6 C11 6.2 16 10.6 19.9 13 C21.2 9 20.6 4 17.8 0 Z" fill="#ee7a4b"/></svg>
<div class="t" style="left:1024.3px;top:95.37px;font-size:22px;line-height:22px;color:#262626;font-weight:normal;font-family:'Liberation Sans', sans-serif;letter-spacing:0.819px;">CountriesListView</div>
<div style="position:absolute;left:1253px;top:93px;width:2px;height:24px;background:#e4e4e4;"></div>
<svg style="position:absolute;left:1302px;top:95px" width="23.78" height="20.5" viewBox="0 0 29 25"><path d="M17.8 0 C23.5 3.8 27.6 10.5 25.6 17.6 C27.2 19.8 28.6 22.6 28.6 24.6 C27 23.2 25 22.6 23 23.1 C16 27.2 6 25.2 0 16.4 C6 19.9 12 20.2 16.2 18.4 C11 15 6 9.2 3.2 4.1 C7 7.6 11 10.6 14 12 C11.6 9 8.6 5.6 6.5 2.6 C11 6.2 16 10.6 19.9 13 C21.2 9 20.6 4 17.8 0 Z" fill="#ee7a4b"/></svg>
<div class="t" style="left:1336.7px;top:95.37px;font-size:22px;line-height:22px;color:#262626;font-weight:normal;font-family:'Liberation Sans', sans-serif;letter-spacing:0.707px;">AddCityView</div>
<div style="position:absolute;left:1508.7px;top:93px;width:2px;height:24px;background:#e4e4e4;"></div>
<svg style="position:absolute;left:1560px;top:94px" width="18" height="23" viewBox="0 0 18 23"><path d="M3.5 1 H10.2 L17 8.2 V19.4 Q17 22 14.4 22 H3.6 Q1 22 1 19.4 V3.6 Q1 1 3.5 1 Z" fill="none" stroke="#65717d" stroke-width="1.9" stroke-linejoin="round"/><path d="M9.4 1.4 V7.2 Q9.4 9.4 11.6 9.4 H16.8" fill="none" stroke="#65717d" stroke-width="1.9"/></svg>
<div class="t" style="left:1593px;top:95.37px;font-size:22px;line-height:22px;color:#262626;font-weight:normal;font-family:'Liberation Sans', sans-serif;letter-spacing:0.64px;">No Editor</div>
<div style="position:absolute;left:1729px;top:93px;width:2px;height:24px;background:#e4e4e4;"></div>
<svg style="position:absolute;left:1777.5px;top:95px" width="23.78" height="20.5" viewBox="0 0 29 25"><path d="M17.8 0 C23.5 3.8 27.6 10.5 25.6 17.6 C27.2 19.8 28.6 22.6 28.6 24.6 C27 23.2 25 22.6 23 23.1 C16 27.2 6 25.2 0 16.4 C6 19.9 12 20.2 16.2 18.4 C11 15 6 9.2 3.2 4.1 C7 7.6 11 10.6 14 12 C11.6 9 8.6 5.6 6.5 2.6 C11 6.2 16 10.6 19.9 13 C21.2 9 20.6 4 17.8 0 Z" fill="#ee7a4b"/></svg>
<div class="t" style="left:1812px;top:95.37px;font-size:22px;line-height:22px;color:#262626;font-weight:normal;font-family:'Liberation Sans', sans-serif;letter-spacing:1.078px;">Country</div>
<div style="position:absolute;left:1935px;top:93px;width:2px;height:24px;background:#e4e4e4;"></div>
<svg style="position:absolute;left:1984px;top:95px" width="23.78" height="20.5" viewBox="0 0 29 25"><path d="M17.8 0 C23.5 3.8 27.6 10.5 25.6 17.6 C27.2 19.8 28.6 22.6 28.6 24.6 C27 23.2 25 22.6 23 23.1 C16 27.2 6 25.2 0 16.4 C6 19.9 12 20.2 16.2 18.4 C11 15 6 9.2 3.2 4.1 C7 7.6 11 10.6 14 12 C11.6 9 8.6 5.6 6.5 2.6 C11 6.2 16 10.6 19.9 13 C21.2 9 20.6 4 17.8 0 Z" fill="#ee7a4b"/></svg>
<div class="t" style="left:2018.5px;top:95.37px;font-size:22px;line-height:22px;color:#262626;font-weight:normal;font-family:'Liberation Sans', sans-serif;letter-spacing:0.957px;">Country+City</div>
<div style="position:absolute;left:2197px;top:93px;width:2px;height:24px;background:#e4e4e4;"></div>
<svg style="position:absolute;left:2245px;top:95px" width="23.78" height="20.5" viewBox="0 0 29 25"><path d="M17.8 0 C23.5 3.8 27.6 10.5 25.6 17.6 C27.2 19.8 28.6 22.6 28.6 24.6 C27 23.2 25 22.6 23 23.1 C16 27.2 6 25.2 0 16.4 C6 19.9 12 20.2 16.2 18.4 C11 15 6 9.2 3.2 4.1 C7 7.6 11 10.6 14 12 C11.6 9 8.6 5.6 6.5 2.6 C11 6.2 16 10.6 19.9 13 C21.2 9 20.6 4 17.8 0 Z" fill="#ee7a4b"/></svg>
<div class="t" style="left:2280px;top:95.37px;font-size:22px;line-height:22px;color:#262626;font-weight:normal;font-family:'Liberation Sans', sans-serif;letter-spacing:0.919px;">CountriesListViewModel</div>
<svg style="position:absolute;left:2622px;top:95px" width="23.78" height="20.5" viewBox="0 0 29 25"><path d="M17.8 0 C23.5 3.8 27.6 10.5 25.6 17.6 C27.2 19.8 28.6 22.6 28.6 24.6 C27 23.2 25 22.6 23 23.1 C16 27.2 6 25.2 0 16.4 C6 19.9 12 20.2 16.2 18.4 C11 15 6 9.2 3.2 4.1 C7 7.6 11 10.6 14 12 C11.6 9 8.6 5.6 6.5 2.6 C11 6.2 16 10.6 19.9 13 C21.2 9 20.6 4 17.8 0 Z" fill="#ee7a4b"/></svg>
<div class="t" style="left:2656px;top:95.37px;font-size:22px;line-height:22px;color:#3478f6;font-weight:normal;font-family:'Liberation Sans', sans-serif;letter-spacing:0.796px;">CitiesListView</div>
<div style="position:absolute;left:577px;top:78px;width:152px;height:54px;background:#ffffff;"></div>
<div style="position:absolute;left:729px;top:78px;width:12px;height:54px;background:linear-gradient(to right, rgba(0,0,0,0.13), rgba(0,0,0,0));"></div>
<div style="position:absolute;left:729px;top:78px;width:10px;height:54px;overflow:hidden;"><div class="t" style="left:-8px;top:82px;"></div></div>
<svg style="position:absolute;left:729px;top:101px" width="8" height="13" viewBox="0 0 8 13"><path d="M0 1.1 Q4.6 1.1 4.6 6 Q4.6 10.9 0 10.9" fill="none" stroke="#262626" stroke-width="2.3"/></svg>
<svg style="position:absolute;left:595px;top:92px" width="26" height="26" viewBox="0 0 26 26"><g fill="none" stroke="#7a7a7a" stroke-width="2"><rect x="1" y="1" width="9.4" height="9.4"/><rect x="15" y="1" width="9.4" height="9.4"/><rect x="1" y="15" width="9.4" height="9.4"/><rect x="15" y="15" width="9.4" height="9.4"/><path d="M11.4 6.6 H18.4 M19 11.4 V17.6 M7.8 19 H14"/></g></svg>
<div style="position:absolute;left:639px;top:93px;width:2px;height:24px;background:#e4e4e4;"></div>
<svg style="position:absolute;left:657px;top:91.5px" width="17" height="28" viewBox="0 0 17 28"><path d="M15 1.5 L2 14 L15 26.5" fill="none" stroke="#7a7a7a" stroke-width="2.2" stroke-linecap="round" stroke-linejoin="round"/></svg>
<svg style="position:absolute;left:697px;top:91.5px" width="17" height="28" viewBox="0 0 17 28"><path d="M2 1.5 L15 14 L2 26.5" fill="none" stroke="#c2c2c2" stroke-width="2.2" stroke-linecap="round" stroke-linejoin="round"/></svg>
<svg style="position:absolute;left:2860px;top:91px" width="25" height="28" viewBox="0 0 25 28"><g fill="none" stroke="#7a7a7a" stroke-width="2" stroke-linecap="round" stroke-linejoin="round"><path d="M5 8 H23.6 M16.6 1.2 L23.6 8 L16.6 14.6"/><path d="M18.6 20 H0.6 M7.2 13.6 L0.6 20 L7.2 26.4"/></g></svg>
<svg style="position:absolute;left:2906px;top:92px" width="37" height="26" viewBox="0 0 37 26"><g fill="none" stroke="#7a7a7a" stroke-width="2"><path d="M0.3 1 H11.7 M0.3 7 H15.7 M0.3 13 H11.7 M0.3 19 H15.7 M0.3 25 H15.7"/><rect x="21.3" y="1.2" width="14.4" height="24.6"/><rect x="25.3" y="5.4" width="6.5" height="16.2"/></g></svg>
<div style="position:absolute;left:2960px;top:94px;width:2px;height:23px;background:#e4e4e4;"></div>
<svg style="position:absolute;left:2980px;top:92px" width="27" height="26" viewBox="0 0 27 26"><g fill="none" stroke="#7a7a7a" stroke-width="2"><rect x="1" y="1" width="25" height="24" rx="4"/><path d="M9 1 V25 M13 13 H22 M17.5 8.5 V17.5"/></g></svg>
<svg style="position:absolute;left:594px;top:147.2px" width="25.6" height="25.6" viewBox="0 0 30 30"><rect x="0.5" y="0.5" width="29" height="29" rx="7.5" fill="#2f74ea"/><rect x="3.2" y="3.2" width="23.6" height="23.6" rx="5" fill="none" stroke="#ffffff" stroke-width="1.7" opacity="0.9"/><g stroke="#ffffff" stroke-width="2.2" stroke-linecap="round" fill="none"><path d="M12.8 7.4 L21.5 22"/><path d="M16.4 7.4 L10.6 16.4"/><path d="M5.9 18.2 H23.4"/><path d="M8.7 21 L7.5 22.7"/></g></svg>
<div class="t" style="left:631.6px;top:150.57px;font-size:22px;line-height:22px;color:#262626;font-weight:normal;font-family:'Liberation Sans', sans-serif;letter-spacing:0.746px;">CountriesAndCities</div>
<svg style="position:absolute;left:846.2px;top:151px" width="8" height="21" viewBox="0 0 8 21"><path d="M1.2 1.2 L5.4 10.2 L1.2 19.4" fill="none" stroke="#848484" stroke-width="2" stroke-linecap="round" stroke-linejoin="round"/></svg>
<svg style="position:absolute;left:870.4px;top:150.2px" width="24.5" height="19.6" viewBox="0 0 29 24"><path d="M0 3 Q0 0 3 0 H9 Q10.4 0 11.4 1 L13 2.6 H26 Q29 2.6 29 5.6 V7.7 H0 Z" fill="#9a9ea3"/><path d="M0 10.1 H29 V21 Q29 24 26 24 H3 Q0 24 0 21 Z" fill="#9a9ea3"/></svg>
<div class="t" style="left:907.6px;top:150.57px;font-size:22px;line-height:22px;color:#262626;font-weight:normal;font-family:'Liberation Sans', sans-serif;letter-spacing:0.77px;">CountriesAndCities</div>
<svg style="position:absolute;left:1121.5px;top:151px" width="8" height="21" viewBox="0 0 8 21"><path d="M1.2 1.2 L5.4 10.2 L1.2 19.4" fill="none" stroke="#848484" stroke-width="2" stroke-linecap="round" stroke-linejoin="round"/></svg>
<svg style="position:absolute;left:1146.4px;top:150.2px" width="24.5" height="19.6" viewBox="0 0 29 24"><path d="M0 3 Q0 0 3 0 H9 Q10.4 0 11.4 1 L13 2.6 H26 Q29 2.6 29 5.6 V7.7 H0 Z" fill="#9a9ea3"/><path d="M0 10.1 H29 V21 Q29 24 26 24 H3 Q0 24 0 21 Z" fill="#9a9ea3"/></svg>
<div class="t" style="left:1184px;top:150.57px;font-size:22px;line-height:22px;color:#262626;font-weight:normal;font-family:'Liberation Sans', sans-serif;letter-spacing:0.328px;">Views</div>
<svg style="position:absolute;left:1255.5px;top:151px" width="8" height="21" viewBox="0 0 8 21"><path d="M1.2 1.2 L5.4 10.2 L1.2 19.4" fill="none" stroke="#848484" stroke-width="2" stroke-linecap="round" stroke-linejoin="round"/></svg>
<svg style="position:absolute;left:1281px;top:150.2px" width="24.07" height="20.75" viewBox="0 0 29 25"><path d="M17.8 0 C23.5 3.8 27.6 10.5 25.6 17.6 C27.2 19.8 28.6 22.6 28.6 24.6 C27 23.2 25 22.6 23 23.1 C16 27.2 6 25.2 0 16.4 C6 19.9 12 20.2 16.2 18.4 C11 15 6 9.2 3.2 4.1 C7 7.6 11 10.6 14 12 C11.6 9 8.6 5.6 6.5 2.6 C11 6.2 16 10.6 19.9 13 C21.2 9 20.6 4 17.8 0 Z" fill="#ee7a4b"/></svg>
<div class="t" style="left:1318px;top:150.57px;font-size:22px;line-height:22px;color:#262626;font-weight:normal;font-family:'Liberation Sans', sans-serif;letter-spacing:0.72px;">CitiesListView</div>
<svg style="position:absolute;left:1475px;top:151px" width="8" height="21" viewBox="0 0 8 21"><path d="M1.2 1.2 L5.4 10.2 L1.2 19.4" fill="none" stroke="#848484" stroke-width="2" stroke-linecap="round" stroke-linejoin="round"/></svg>
<div style="position:absolute;left:1499px;top:146px;width:28px;height:28px;border-radius:6px;background:#c35adf;"></div>
<div class="t" style="left:1499px;top:149.87px;font-size:22px;line-height:22px;color:#ffffff;font-weight:bold;font-family:'Liberation Sans', sans-serif;width:28px;text-align:center;">S</div>
<div class="t" style="left:1537.6px;top:150.57px;font-size:22px;line-height:22px;color:#262626;font-weight:normal;font-family:'Liberation Sans', sans-serif;letter-spacing:0.72px;">CitiesListView</div>
<div style="position:absolute;left:577px;top:588px;width:2417px;height:44px;background:#edf4fe;"></div>
<div style="position:absolute;left:683px;top:194px;width:14px;height:259px;background:#e6e6e6;border-radius:7px;"></div>
<div style="position:absolute;left:683px;top:589.7px;width:14px;height:568.0px;background:#e6e6e6;border-radius:7px;"></div>
<div style="position:absolute;left:683px;top:589.7px;width:14px;height:42.3px;background:#d8dee6;border-radius:7px 7px 0 0;"></div>
<div style="position:absolute;left:683px;top:852.9px;width:14px;height:260.9px;background:#d2d2d2;border-radius:7px;box-shadow:0 0 0 1.5px rgba(255,255,255,0.65);"></div>
<div style="position:absolute;left:683px;top:896.6px;width:14px;height:128.9px;background:#bfbfbf;border-radius:7px;box-shadow:0 0 0 1.5px rgba(255,255,255,0.65);"></div>
<div class="t" style="right:2350px;top:196.71px;font-size:32px;line-height:32px;color:#a3a3a3;font-weight:normal;font-family:'Liberation Sans', sans-serif;transform:scaleX(0.9);transform-origin:100% 50%;">1</div>
<div class="t" style="left:720.5px;top:200.72px;font-size:33px;line-height:33px;color:#262626;font-weight:normal;font-family:'Liberation Mono', monospace;"><span style="color:#67747f;">//</span></div>
<div class="t" style="right:2350px;top:240.81px;font-size:32px;line-height:32px;color:#a3a3a3;font-weight:normal;font-family:'Liberation Sans', sans-serif;transform:scaleX(0.9);transform-origin:100% 50%;">2</div>
<div class="t" style="left:720.5px;top:244.72px;font-size:33px;line-height:33px;color:#262626;font-weight:normal;font-family:'Liberation Mono', monospace;"><span style="color:#67747f;">//  CitiesListView.swift</span></div>
<div class="t" style="right:2350px;top:284.91px;font-size:32px;line-height:32px;color:#a3a3a3;font-weight:normal;font-family:'Liberation Sans', sans-serif;transform:scaleX(0.9);transform-origin:100% 50%;">3</div>
<div class="t" style="left:720.5px;top:288.72px;font-size:33px;line-height:33px;color:#262626;font-weight:normal;font-family:'Liberation Mono', monospace;"><span style="color:#67747f;">//  CountriesAndCities</span></div>
<div class="t" style="right:2350px;top:329.01px;font-size:32px;line-height:32px;color:#a3a3a3;font-weight:normal;font-family:'Liberation Sans', sans-serif;transform:scaleX(0.9);transform-origin:100% 50%;">4</div>
<div class="t" style="left:720.5px;top:332.72px;font-size:33px;line-height:33px;color:#262626;font-weight:normal;font-family:'Liberation Mono', monospace;"><span style="color:#67747f;">//</span></div>
<div class="t" style="right:2350px;top:373.11px;font-size:32px;line-height:32px;color:#a3a3a3;font-weight:normal;font-family:'Liberation Sans', sans-serif;transform:scaleX(0.9);transform-origin:100% 50%;">5</div>
<div class="t" style="left:720.5px;top:376.72px;font-size:33px;line-height:33px;color:#262626;font-weight:normal;font-family:'Liberation Mono', monospace;"><span style="color:#67747f;">//  Created by Russell Gordon on 2024-06-08.</span></div>
<div class="t" style="right:2350px;top:417.21px;font-size:32px;line-height:32px;color:#a3a3a3;font-weight:normal;font-family:'Liberation Sans', sans-serif;transform:scaleX(0.9);transform-origin:100% 50%;">6</div>
<div class="t" style="left:720.5px;top:420.72px;font-size:33px;line-height:33px;color:#262626;font-weight:normal;font-family:'Liberation Mono', monospace;"><span style="color:#67747f;">//</span></div>
<div class="t" style="right:2350px;top:461.31px;font-size:32px;line-height:32px;color:#a3a3a3;font-weight:normal;font-family:'Liberation Sans', sans-serif;transform:scaleX(0.9);transform-origin:100% 50%;">7</div>
<div class="t" style="right:2350px;top:505.41px;font-size:32px;line-height:32px;color:#a3a3a3;font-weight:normal;font-family:'Liberation Sans', sans-serif;transform:scaleX(0.9);transform-origin:100% 50%;">8</div>
<div class="t" style="left:720.5px;top:508.72px;font-size:33px;line-height:33px;color:#262626;font-weight:normal;font-family:'Liberation Mono', monospace;"><span style="color:#a03da0;font-weight:bold;">import</span><span style="color:#262626;"> SwiftUI</span></div>
<div class="t" style="right:2350px;top:549.51px;font-size:32px;line-height:32px;color:#a3a3a3;font-weight:normal;font-family:'Liberation Sans', sans-serif;transform:scaleX(0.9);transform-origin:100% 50%;">9</div>
<div class="t" style="right:2350px;top:593.61px;font-size:32px;line-height:32px;color:#1f1f1f;font-weight:normal;font-family:'Liberation Sans', sans-serif;transform:scaleX(0.9);transform-origin:100% 50%;">10</div>
<div class="t" style="left:720.5px;top:596.72px;font-size:33px;line-height:33px;color:#262626;font-weight:normal;font-family:'Liberation Mono', monospace;"><span style="color:#a03da0;font-weight:bold;">struct</span> <span style="color:#245e8a;">CitiesListView</span><span style="color:#262626;">: </span><span style="color:#4b22ab;">View</span><span style="color:#262626;"> {</span></div>
<div class="t" style="right:2350px;top:637.71px;font-size:32px;line-height:32px;color:#a3a3a3;font-weight:normal;font-family:'Liberation Sans', sans-serif;transform:scaleX(0.9);transform-origin:100% 50%;">11</div>
<div class="t" style="right:2350px;top:681.81px;font-size:32px;line-height:32px;color:#a3a3a3;font-weight:normal;font-family:'Liberation Sans', sans-serif;transform:scaleX(0.9);transform-origin:100% 50%;">12</div>
<div class="t" style="left:720.5px;top:684.72px;font-size:33px;line-height:33px;color:#262626;font-weight:normal;font-family:'Liberation Mono', monospace;">    <span style="color:#67747f;">// </span><span style="color:#57616b;font-weight:bold;">MARK: Stored properties</span></div>
<div class="t" style="right:2350px;top:725.91px;font-size:32px;line-height:32px;color:#a3a3a3;font-weight:normal;font-family:'Liberation Sans', sans-serif;transform:scaleX(0.9);transform-origin:100% 50%;">13</div>
<div class="t" style="left:720.5px;top:728.72px;font-size:33px;line-height:33px;color:#262626;font-weight:normal;font-family:'Liberation Mono', monospace;">    <span style="color:#a03da0;font-weight:bold;">let</span> <span style="color:#2b78b3;">country</span><span style="color:#262626;">: </span><span style="color:#2a5759;">CountryCity</span></div>
<div class="t" style="right:2350px;top:770.01px;font-size:32px;line-height:32px;color:#a3a3a3;font-weight:normal;font-family:'Liberation Sans', sans-serif;transform:scaleX(0.9);transform-origin:100% 50%;">14</div>
<div class="t" style="right:2350px;top:814.11px;font-size:32px;line-height:32px;color:#a3a3a3;font-weight:normal;font-family:'Liberation Sans', sans-serif;transform:scaleX(0.9);transform-origin:100% 50%;">15</div>
<div class="t" style="left:720.5px;top:816.72px;font-size:33px;line-height:33px;color:#262626;font-weight:normal;font-family:'Liberation Mono', monospace;">    <span style="color:#67747f;">// </span><span style="color:#57616b;font-weight:bold;">MARK: Computed properties</span></div>
<div class="t" style="right:2350px;top:858.21px;font-size:32px;line-height:32px;color:#a3a3a3;font-weight:normal;font-family:'Liberation Sans', sans-serif;transform:scaleX(0.9);transform-origin:100% 50%;">16</div>
<div class="t" style="left:720.5px;top:860.72px;font-size:33px;line-height:33px;color:#262626;font-weight:normal;font-family:'Liberation Mono', monospace;">    <span style="color:#a03da0;font-weight:bold;">var</span> <span style="color:#2b78b3;">body</span><span style="color:#262626;">: </span><span style="color:#a03da0;font-weight:bold;">some</span> <span style="color:#4b22ab;">View</span><span style="color:#262626;"> {</span></div>
<div class="t" style="right:2350px;top:902.31px;font-size:32px;line-height:32px;color:#a3a3a3;font-weight:normal;font-family:'Liberation Sans', sans-serif;transform:scaleX(0.9);transform-origin:100% 50%;">17</div>
<div class="t" style="left:720.5px;top:904.72px;font-size:33px;line-height:33px;color:#262626;font-weight:normal;font-family:'Liberation Mono', monospace;">        <span style="color:#4b22ab;">List</span><span style="color:#262626;">(</span><span style="color:#4a7d84;">country</span><span style="color:#262626;">.</span><span style="color:#4a7d84;">cities</span><span style="color:#262626;">) { city </span><span style="color:#a03da0;font-weight:bold;">in</span></div>
<div class="t" style="right:2350px;top:946.41px;font-size:32px;line-height:32px;color:#a3a3a3;font-weight:normal;font-family:'Liberation Sans', sans-serif;transform:scaleX(0.9);transform-origin:100% 50%;">18</div>
<div class="t" style="left:720.5px;top:948.72px;font-size:33px;line-height:33px;color:#262626;font-weight:normal;font-family:'Liberation Mono', monospace;">            <span style="color:#4b22ab;">Text</span><span style="color:#262626;">(city.name)</span></div>
<div class="t" style="right:2350px;top:990.51px;font-size:32px;line-height:32px;color:#a3a3a3;font-weight:normal;font-family:'Liberation Sans', sans-serif;transform:scaleX(0.9);transform-origin:100% 50%;">19</div>
<div class="t" style="left:720.5px;top:992.72px;font-size:33px;line-height:33px;color:#262626;font-weight:normal;font-family:'Liberation Mono', monospace;">        <span style="color:#262626;">}</span></div>
<div class="t" style="right:2350px;top:1034.61px;font-size:32px;line-height:32px;color:#a3a3a3;font-weight:normal;font-family:'Liberation Sans', sans-serif;transform:scaleX(0.9);transform-origin:100% 50%;">20</div>
<div class="t" style="left:720.5px;top:1036.72px;font-size:33px;line-height:33px;color:#262626;font-weight:normal;font-family:'Liberation Mono', monospace;">        <span style="color:#262626;">.</span><span style="color:#7a4db8;">navigationTitle</span><span style="color:#262626;">(</span><span style="color:#4a7d84;">country</span><span style="color:#262626;">.</span><span style="color:#4a7d84;">name</span><span style="color:#262626;">)</span></div>
<div class="t" style="right:2350px;top:1078.71px;font-size:32px;line-height:32px;color:#a3a3a3;font-weight:normal;font-family:'Liberation Sans', sans-serif;transform:scaleX(0.9);transform-origin:100% 50%;">21</div>
<div class="t" style="left:720.5px;top:1080.72px;font-size:33px;line-height:33px;color:#262626;font-weight:normal;font-family:'Liberation Mono', monospace;">    <span style="color:#262626;">}</span></div>
<div class="t" style="right:2350px;top:1122.81px;font-size:32px;line-height:32px;color:#a3a3a3;font-weight:normal;font-family:'Liberation Sans', sans-serif;transform:scaleX(0.9);transform-origin:100% 50%;">22</div>
<div class="t" style="left:720.5px;top:1124.72px;font-size:33px;line-height:33px;color:#262626;font-weight:normal;font-family:'Liberation Mono', monospace;"><span style="color:#262626;">}</span></div>
<div class="t" style="right:2350px;top:1166.91px;font-size:32px;line-height:32px;color:#a3a3a3;font-weight:normal;font-family:'Liberation Sans', sans-serif;transform:scaleX(0.9);transform-origin:100% 50%;">23</div>
<div style="position:absolute;left:2994px;top:190px;width:2px;height:1642px;background:#e9e9e9;"></div>
<div style="position:absolute;left:2996px;top:190px;width:28px;height:1642px;background:#fafafa;"></div>
<div style="position:absolute;left:3022px;top:190px;width:2px;height:1642px;background:#ececec;"></div>
<div style="position:absolute;left:3002px;top:196px;width:16px;height:1477px;background:#7b7b7b;border-radius:8px;"></div>
<div style="position:absolute;left:577px;top:1832px;width:2447px;height:2px;background:#e3e3e3;"></div>
<svg style="position:absolute;left:600px;top:1852.2px" width="30" height="17.5" viewBox="0 0 30 17.5"><path d="M3 0 H23 Q25 0 26.2 1.6 L29.6 8.75 L26.2 15.9 Q25 17.5 23 17.5 H3 Q0 17.5 0 14.5 V3 Q0 0 3 0 Z" fill="#3478f6"/></svg>
<div style="position:absolute;left:645px;top:1849px;width:2px;height:24px;background:#e4e4e4;"></div>
<svg style="position:absolute;left:668px;top:1848px" width="19" height="26" viewBox="0 0 19 26"><rect x="1" y="1" width="5" height="24" rx="1.5" fill="none" stroke="#6e6e6e" stroke-width="2"/><rect x="13" y="1" width="5" height="24" rx="1.5" fill="none" stroke="#6e6e6e" stroke-width="2"/></svg>
<svg style="position:absolute;left:724px;top:1848px" width="27" height="27" viewBox="0 0 27 27"><g fill="none" stroke="#c4c4c4" stroke-width="2"><path d="M0.6 17.6 L13 4.6 L25.2 16.8 M25.2 10.4 V17 H18.6"/><rect x="5.3" y="21.6" width="16.3" height="3.8"/></g></svg>
<svg style="position:absolute;left:788px;top:1848px" width="18" height="26" viewBox="0 0 18 26"><g fill="none" stroke="#c4c4c4" stroke-width="2"><path d="M9 1 V16 M3 10 L9 16 L15 10"/><rect x="1" y="20" width="16" height="5"/></g></svg>
<svg style="position:absolute;left:848px;top:1848px" width="18" height="26" viewBox="0 0 18 26"><g fill="none" stroke="#c4c4c4" stroke-width="2"><path d="M9 16 V1 M3 7 L9 1 L15 7"/><rect x="1" y="20" width="16" height="5"/></g></svg>
<div style="position:absolute;left:887px;top:1849px;width:2px;height:24px;background:#e4e4e4;"></div>
<svg style="position:absolute;left:907px;top:1848px" width="24" height="27" viewBox="0 0 24 27"><g fill="none" stroke="#6e6e6e" stroke-width="2" stroke-linejoin="round"><path d="M9 8 L21 4 V21 L9 25 Z"/><path d="M5 22 V6 L17 2"/><path d="M1 19 V4 L13 0.5"/></g></svg>
<svg style="position:absolute;left:965px;top:1848px" width="28" height="26" viewBox="0 0 28 26"><g fill="none" stroke="#6e6e6e" stroke-width="2"><circle cx="5.5" cy="5" r="4"/><circle cx="5.5" cy="21" r="4"/><circle cx="22" cy="13" r="4"/><path d="M9 7 L18 11.5 M9 19 L18 14.5"/></g></svg>
<svg style="position:absolute;left:1028px;top:1848px" width="23" height="26" viewBox="0 0 23 26"><g fill="none" stroke="#6e6e6e" stroke-width="2"><rect x="1" y="1" width="21" height="10" rx="5"/><rect x="1" y="15" width="21" height="10" rx="5"/></g><circle cx="7" cy="6" r="3" fill="#6e6e6e"/><circle cx="16" cy="20" r="3" fill="#6e6e6e"/></svg>
<svg style="position:absolute;left:1087px;top:1848px" width="26" height="26" viewBox="0 0 26 26"><path d="M24.5 1.5 L1.5 11.5 L12.5 13.5 L14.5 24.5 Z" fill="none" stroke="#6e6e6e" stroke-width="2" stroke-linejoin="round"/></svg>
<div style="position:absolute;left:1129px;top:1849px;width:2px;height:24px;background:#e4e4e4;"></div>
<svg style="position:absolute;left:1149px;top:1848.5px" width="23" height="23" viewBox="0 0 30 30"><rect x="0.5" y="0.5" width="29" height="29" rx="7.5" fill="#787878"/><rect x="3.2" y="3.2" width="23.6" height="23.6" rx="5" fill="none" stroke="#787878" stroke-width="1.3" opacity="0.9"/><g stroke="#ffffff" stroke-width="2.2" stroke-linecap="round" fill="none"><path d="M12.8 7.4 L21.5 22"/><path d="M16.4 7.4 L10.6 16.4"/><path d="M5.9 18.2 H23.4"/><path d="M8.7 21 L7.5 22.7"/></g></svg>
<div class="t" style="left:1185.7px;top:1850.37px;font-size:22px;line-height:22px;color:#262626;font-weight:normal;font-family:'Liberation Sans', sans-serif;letter-spacing:0.764px;">CountriesAndCities</div>
<div class="t" style="left:2761px;top:1850.37px;font-size:22px;line-height:22px;color:#858585;font-weight:normal;font-family:'Liberation Sans', sans-serif;letter-spacing:0.926px;">Line: 10  Col: 12</div>
<div style="position:absolute;left:2954px;top:1849px;width:2px;height:23px;background:#e4e4e4;"></div>
<svg style="position:absolute;left:2973.5px;top:1848.5px" width="26" height="25" viewBox="0 0 26 25"><rect x="1" y="1" width="24" height="23" rx="4" fill="none" stroke="#6e6e6e" stroke-width="2"/><rect x="4" y="16" width="18" height="5" rx="2" fill="#6e6e6e"/></svg>
</div></body></html>
